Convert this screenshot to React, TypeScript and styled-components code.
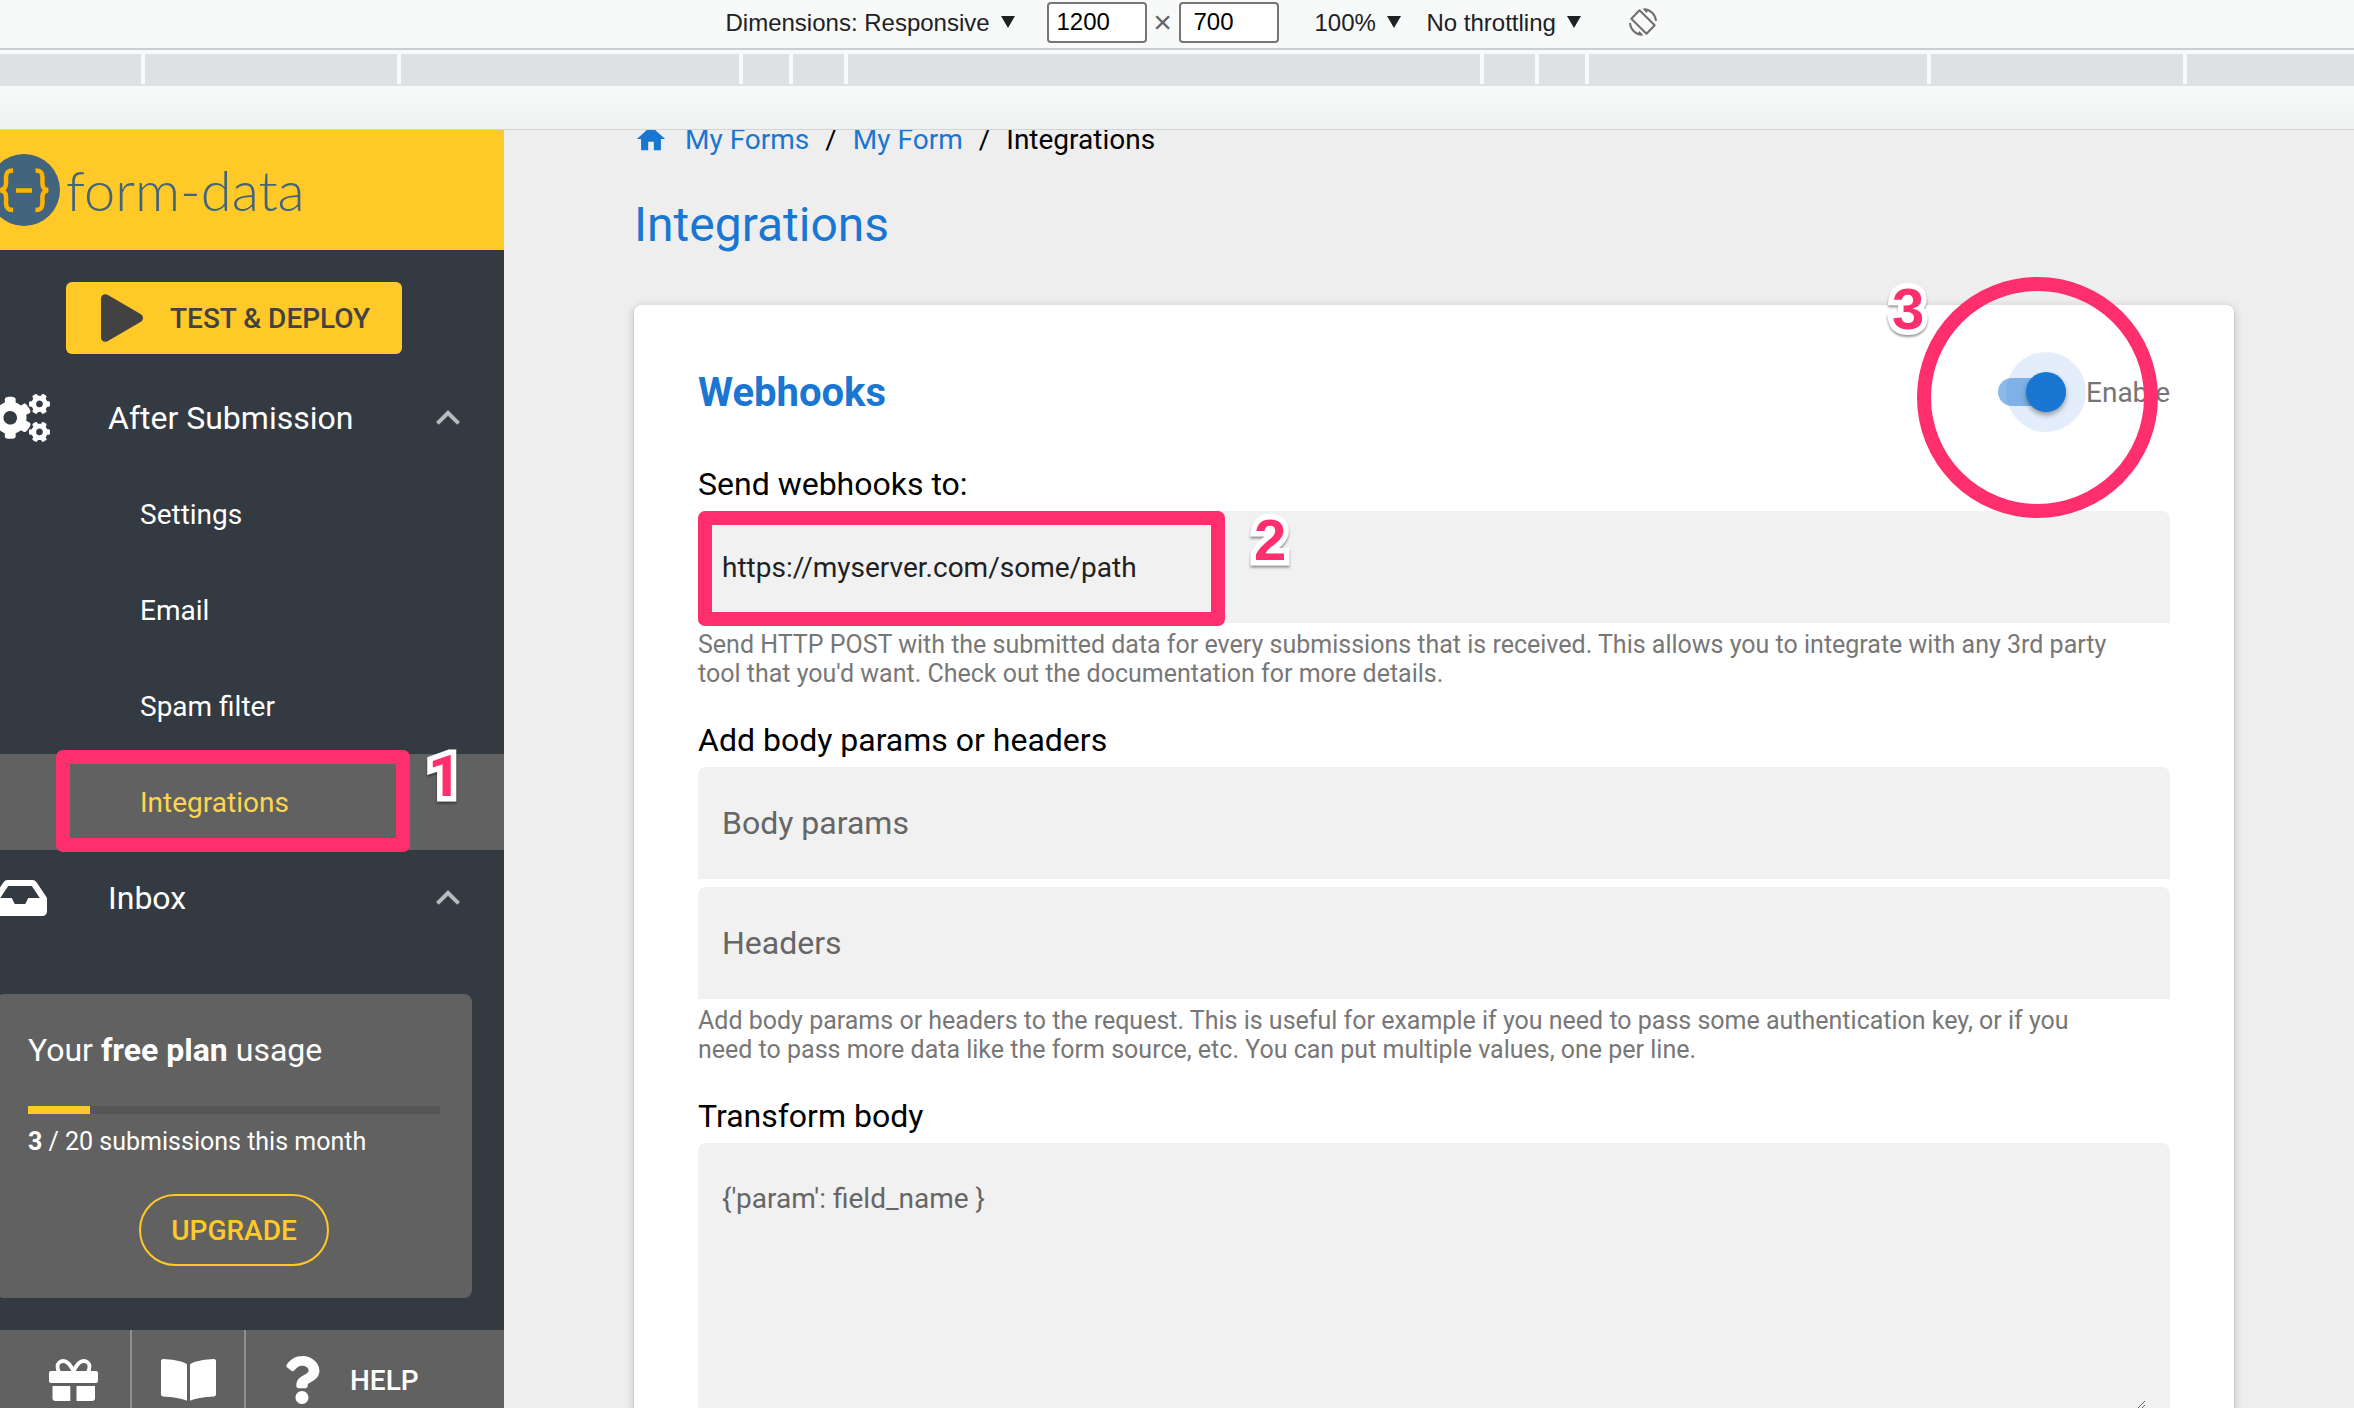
import React, { useState } from "react";
import styled, { createGlobalStyle, css } from "styled-components";
import { FaCogs, FaInbox, FaQuestion } from "react-icons/fa";
import { MdHome, MdKeyboardArrowUp } from "react-icons/md";

const color = {
  chrome: "#f8faf9",
  ruler: "#dfe0e4",
  amber: "#ffc928",
  slate: "#343a42",
  grey: "#616161",
  blue: "#1976d2",
  page: "#eeeeee",
  field: "#f1f1f1",
  mark: "#ff2e6c",
  logo: "#42647d",
};

const GlobalStyle = createGlobalStyle`
  *, *::before, *::after { box-sizing: border-box; }
  body { margin: 0; font-family: Roboto, "Liberation Sans", sans-serif; }
  button, input, textarea, select { font: inherit; color: inherit; }
  h1, h2, p, ol, ul { margin: 0; padding: 0; list-style: none; }
  a { color: inherit; text-decoration: none; }
`;

const Screen = styled.div`
  display: flex;
  flex-direction: column;
  height: 100vh;
  overflow: hidden;
`;

/* Device toolbar */

const Toolbar = styled.div`
  flex: none;
  display: flex;
  align-items: center;
  justify-content: center;
  height: 50px;
  padding: 0 0 4px 28px;
  background: ${color.chrome};
  border-bottom: 2px solid #cacdd1;
  color: #202124;
  font: 24px "Liberation Sans", Arial, sans-serif;
`;

const DropDown = styled.label<{ $before?: number; $after: number }>`
  display: grid;
  grid-template-columns: auto 14px;
  align-items: center;
  margin-left: ${(p) => p.$before ?? 0}px;
  margin-right: ${(p) => p.$after}px;

  select {
    grid-area: 1 / 1 / 2 / 3;
    appearance: none;
    margin: 0;
    padding: 0 24px 0 0;
    border: 0;
    background: none;
  }
  svg {
    grid-area: 1 / 2;
    pointer-events: none;
  }
`;

const SizeInput = styled.input<{ $indent: number }>`
  width: 100px;
  height: 41px;
  padding: 0 0 0 ${(p) => p.$indent}px;
  border: 2px solid #757575;
  border-radius: 4px;
  background: #fff;
  color: #000;
`;

const Times = styled.span`
  width: 32px;
  text-align: center;
  color: #5f6368;
  font-size: 32px;
  line-height: 40px;
`;

const RotateButton = styled.button`
  display: flex;
  margin: 0;
  padding: 0;
  border: 0;
  background: none;
`;

const Ruler = styled.div`
  flex: none;
  display: grid;
  grid-template-columns: 1fr 252px 338px 46px 51px 632px 51px 46px 338px 252px 1fr;
  gap: 4px;
  height: 36px;
  margin-left: -26px;
  padding-top: 4px;
  background: linear-gradient(${color.chrome} 34px, ${color.ruler} 34px);

  span { background: ${color.ruler}; }
`;

const Gutter = styled.div`
  flex: none;
  height: 44px;
  background: linear-gradient(${color.chrome}, #eff1f1);
  border-bottom: 1px solid #d0d5d5;
`;

const Viewport = styled.div`
  flex: 1;
  display: flex;
  min-height: 0;
  overflow: hidden;
  background: ${color.page};
`;

/* Sidebar */

const Sidebar = styled.aside`
  flex: none;
  display: flex;
  flex-direction: column;
  width: 504px;
  background: ${color.slate};
  color: #fff;
`;

const Brand = styled.a`
  flex: none;
  display: flex;
  align-items: center;
  gap: 6px;
  height: 120px;
  background: ${color.amber};
  color: ${color.logo};
  font: 300 56px/60px Lato, sans-serif;

  svg { flex: none; margin-left: -12px; }
`;

const DeployButton = styled.button`
  flex: none;
  display: flex;
  align-items: center;
  gap: 27px;
  width: 336px;
  height: 72px;
  margin: 32px 0 16px 66px;
  padding: 0 0 0 35px;
  border: 0;
  border-radius: 6px;
  background: ${color.amber};
  color: #424242;
  font-size: 28px;
  font-weight: 500;
`;

const Menu = styled.ul`
  flex: none;
`;

const GroupButton = styled.button`
  display: grid;
  grid-template-columns: 60px 1fr 48px;
  column-gap: 58px;
  align-items: center;
  justify-items: start;
  width: 100%;
  height: 96px;
  margin: 0;
  padding: 0 32px 0 0;
  border: 0;
  background: none;
  font-size: 32px;
  text-align: left;

  > svg:first-child { justify-self: center; }
  > svg:last-child { color: #b9bbbe; }
`;

const GroupRow = styled.li`
  margin-left: -10px;
`;

const SubLink = styled.a<{ $active?: boolean }>`
  position: relative;
  display: flex;
  align-items: center;
  height: 96px;
  padding-left: 140px;
  font-size: 28px;
  ${(p) =>
    p.$active &&
    css`
      background: ${color.grey};
      color: #ffd54f;
    `}
`;

const PlanCard = styled.section`
  flex: none;
  display: flex;
  flex-direction: column;
  margin: 48px 32px 32px -4px;
  padding: 36px 32px 32px;
  border-radius: 8px;
  background: ${color.grey};
`;

const PlanTitle = styled.p`
  font-size: 32px;
  line-height: 40px;
`;

const PlanMeter = styled.div`
  height: 8px;
  margin: 36px 0 14px;
  background: #575757;
`;

const PlanMeterFill = styled.div`
  height: 100%;
  background: ${color.amber};
`;

const PlanCount = styled.p`
  font-size: 25px;
  line-height: 28px;
`;

const UpgradeButton = styled.button`
  align-self: center;
  width: 190px;
  height: 72px;
  margin-top: 38px;
  padding: 0;
  border: 2px solid ${color.amber};
  border-radius: 36px;
  background: none;
  color: ${color.amber};
  font-size: 28px;
  font-weight: 500;
`;

const FooterBar = styled.nav`
  flex: 1;
  display: grid;
  grid-template-columns: 130px 114px 1fr;
  grid-template-rows: 100px;
  background: ${color.grey};
  font-size: 28px;
  font-weight: 500;

  a {
    display: flex;
    align-items: center;
    justify-content: center;
  }
  a + a { border-left: 2px solid #8f8f8f; }
  a:first-child { padding-left: 16px; }
  a:last-child {
    justify-content: flex-start;
    gap: 24px;
    padding-left: 32px;
  }
`;

/* Content */

const Content = styled.main`
  flex: 1;
  display: flex;
  flex-direction: column;
  min-width: 0;
  padding: 0 120px 0 130px;
`;

const Crumbs = styled.ol`
  flex: none;
  display: flex;
  align-items: center;
  height: 40px;
  margin-top: -11px;
  font-size: 28px;

  li { display: flex; align-items: center; }
  li + li::before { content: "/"; padding: 0 16px; }
  li:first-child + li::before { content: none; }
  a { color: ${color.blue}; }
  svg { display: block; margin-right: 17px; }
`;

const PageTitle = styled.h1`
  margin: 38px 0 52px;
  color: ${color.blue};
  font-size: 48px;
  font-weight: 400;
  line-height: 56px;
`;

const Card = styled.section`
  flex: none;
  padding: 47px 64px;
  border-radius: 8px;
  background: #fff;
  box-shadow: 0 2px 2px rgba(0, 0, 0, 0.12), 0 2px 10px rgba(0, 0, 0, 0.22);
`;

const CardHeader = styled.div`
  display: flex;
  align-items: center;
  justify-content: space-between;
  height: 80px;
  margin-bottom: 32px;
`;

const CardTitle = styled.h2`
  color: ${color.blue};
  font-size: 40px;
  font-weight: 700;
`;

const SwitchLabel = styled.label`
  position: relative;
  display: flex;
  align-items: center;
  gap: 20px;
  color: #757575;
  font-size: 28px;
`;

const SwitchInput = styled.input`
  appearance: none;
  position: relative;
  width: 68px;
  height: 28px;
  margin: 0;
  border-radius: 14px;
  background: rgba(25, 118, 210, 0.5);

  &::before, &::after {
    content: "";
    position: absolute;
    border-radius: 50%;
  }
  &::before {
    top: -26px;
    left: 8px;
    width: 80px;
    height: 80px;
    background: rgba(25, 118, 210, 0.12);
  }
  &::after {
    top: -6px;
    left: 28px;
    width: 40px;
    height: 40px;
    background: ${color.blue};
    box-shadow: 0 3px 5px rgba(0, 0, 0, 0.35);
  }
`;

const FieldLabel = styled.label`
  display: block;
  margin-bottom: 7px;
  color: #000;
  font-size: 32px;
  line-height: 40px;
`;

const FieldBox = styled.div`
  position: relative;

  & + & { margin-top: 8px; }
`;

const fieldStyle = css`
  display: block;
  width: 100%;
  border: 0;
  border-radius: 8px 8px 0 0;
  background: ${color.field};
  color: #212121;
  &::placeholder { color: #666; opacity: 1; }
`;

const TextField = styled.input<{ $large?: boolean }>`
  ${fieldStyle}
  height: 112px;
  padding: 0 24px;
  font-size: ${(p) => (p.$large ? 32 : 28)}px;
`;

const AreaFrame = styled.div`
  padding: 38px 24px 32px;
  border-radius: 8px 8px 0 0;
  background: ${color.field};
`;

const TextArea = styled.textarea`
  ${fieldStyle}
  height: 228px;
  padding: 0;
  font-size: 28px;
  line-height: 36px;
  resize: vertical;
`;

const Hint = styled.p`
  margin: 7px 0 32px;
  color: #777;
  font-size: 25px;
  line-height: 29px;
`;

/* Tutorial marks laid over the page */

type Spot = { $left: number; $top: number };

const MarkBox = styled.span<Spot & { $width: number; $height: number; $round?: boolean }>`
  position: absolute;
  z-index: 2;
  left: ${(p) => p.$left}px;
  top: ${(p) => p.$top}px;
  width: ${(p) => p.$width}px;
  height: ${(p) => p.$height}px;
  border: 14px solid ${color.mark};
  border-radius: ${(p) => (p.$round ? "50%" : "7px")};
  pointer-events: none;
`;

const MarkNumber = styled.span<Spot & { $family?: string }>`
  position: absolute;
  z-index: 2;
  left: ${(p) => p.$left}px;
  top: ${(p) => p.$top}px;
  color: ${color.mark};
  font: 700 58px/58px ${(p) => p.$family ?? '"Liberation Sans"'}, Arial, sans-serif;
  -webkit-text-stroke: 11px #fff;
  paint-order: stroke fill;
  stroke-linejoin: round;
  filter: drop-shadow(0 2px 1px rgba(0, 0, 0, 0.4));
  pointer-events: none;
`;

const Triangle = () => (
  <svg width="14" height="12" viewBox="0 0 14 12" aria-hidden="true">
    <path d="M0 0h14L7 12z" fill="#202124" />
  </svg>
);

const RotateIcon = () => (
  <svg width="28" height="28" viewBox="0 0 28 28" fill="none" stroke="#6e6e6e" strokeWidth="2" aria-hidden="true">
    <path d="M10.5 2.3 25.7 17.2 17.5 25.7 2.3 10.8z" strokeLinejoin="round" />
    <path d="M15 1.2C21.5 1.4 26.5 6.5 27 13" />
    <path d="M13 26.8C6.5 26.6 1.5 21.5 1 15" />
    <path d="M13.5 0.5 20 1.5 17.5 5z" fill="#6e6e6e" stroke="none" />
    <path d="M14.5 27.5 8 26.5 10.5 23z" fill="#6e6e6e" stroke="none" />
  </svg>
);

const LogoMark = () => (
  <svg width="72" height="72" viewBox="0 0 72 72" aria-hidden="true">
    <circle cx="36" cy="36" r="36" fill={color.logo} />
    <g fill="none" stroke="#ffb300" strokeWidth="4.5">
      <path d="M25 16.5C19.5 16.5 18 19 18 23.5C18 29 19.5 35 12 36.2C19.5 37.5 18 43 18 48.5C18 53.5 19.5 56 25 56" />
      <path d="M47.5 16.5C53 16.5 54.5 19 54.5 23.5C54.5 29 53 35 60 36.2C53 37.5 54.5 43 54.5 48.5C54.5 53.5 53 56 47.5 56" />
      <path d="M28 36.5h16" />
    </g>
  </svg>
);

const PlayIcon = () => (
  <svg width="42" height="48" viewBox="0 0 42 48" aria-hidden="true">
    <path
      d="M0 4.5C0 1 3.5-1 6.5 .8L39.5 20C42.8 22 42.8 26 39.5 28L6.5 47.2C3.5 49 0 47 0 43.5z"
      fill="currentColor"
    />
  </svg>
);

const GiftIcon = () => (
  <svg width="49" height="42" viewBox="0 0 49 42" fill="#fff" aria-hidden="true">
    <rect y="12" width="49" height="12" rx="2" />
    <path d="M3.5 27H21.3V42H6.5a3 3 0 0 1-3-3z" />
    <path d="M27.5 27H46V39a3 3 0 0 1-3 3H27.5z" />
    <path
      d="M24.5 12C21.5 6 18.5 2 14.5 2C11 2 8.5 4.5 8.5 7.5C8.5 9.5 9 11 10 13M24.5 12C27.5 6 30.5 2 34.5 2C38 2 40.5 4.5 40.5 7.5C40.5 9.5 40 11 39 13"
      fill="none"
      stroke="#fff"
      strokeWidth="3.8"
    />
  </svg>
);

const BookIcon = () => (
  <svg width="55" height="42" viewBox="0 0 55 40" preserveAspectRatio="none" fill="#fff" aria-hidden="true">
    <path d="M0 2C0 .8 1 0 2.2 0C10 .4 19 1.5 25 4.2C25.7 4.5 26 5 26 5.8V39.8C19.5 36.8 10 36 2 35.6C.8 35.5 0 34.7 0 33.5z" />
    <path d="M55 2C55 .8 54 0 52.8 0C45 .4 36 1.5 30 4.2C29.3 4.5 29 5 29 5.8V39.8C35.5 36.8 45 36 53 35.6C54.2 35.5 55 34.7 55 33.5z" />
  </svg>
);

const SUBMENU = ["Settings", "Email", "Spam filter", "Integrations"];

export default function App() {
  const [enabled, setEnabled] = useState(true);
  const used = 3;
  const limit = 20;

  return (
    <Screen>
      <GlobalStyle />
      <Toolbar>
        <DropDown $after={32}>
          <select aria-label="Device">
            <option>Dimensions: Responsive</option>
          </select>
          <Triangle />
        </DropDown>
        <SizeInput $indent={8} defaultValue="1200" aria-label="Width" />
        <Times>×</Times>
        <SizeInput $indent={13} defaultValue="700" aria-label="Height" />
        <DropDown $before={36} $after={26}>
          <select aria-label="Zoom">
            <option>100%</option>
          </select>
          <Triangle />
        </DropDown>
        <DropDown $after={48}>
          <select aria-label="Throttling">
            <option>No throttling</option>
          </select>
          <Triangle />
        </DropDown>
        <RotateButton aria-label="Rotate">
          <RotateIcon />
        </RotateButton>
      </Toolbar>
      <Ruler aria-hidden="true">
        {Array.from({ length: 11 }, (_, i) => (
          <span key={i} />
        ))}
      </Ruler>
      <Gutter />

      <Viewport>
        <Sidebar>
          <Brand href="#home">
            <LogoMark />
            form-data
          </Brand>
          <DeployButton>
            <PlayIcon />
            TEST &amp; DEPLOY
          </DeployButton>
          <Menu>
            <GroupRow>
              <GroupButton>
                <FaCogs size={60} viewBox="0 0 640 512" />
                After Submission
                <MdKeyboardArrowUp size={48} />
              </GroupButton>
            </GroupRow>
            {SUBMENU.map((name) => {
              const active = name === "Integrations";
              return (
                <li key={name}>
                  <SubLink href={`#${name}`} $active={active}>
                    {name}
                    {active && (
                      <>
                        <MarkBox $left={56} $top={-4} $width={354} $height={102} />
                        <MarkNumber $left={428} $top={-7} $family="Roboto">1</MarkNumber>
                      </>
                    )}
                  </SubLink>
                </li>
              );
            })}
            <GroupRow>
              <GroupButton>
                <FaInbox size={54} />
                Inbox
                <MdKeyboardArrowUp size={48} />
              </GroupButton>
            </GroupRow>
          </Menu>
          <PlanCard>
            <PlanTitle>
              Your <b>free plan</b> usage
            </PlanTitle>
            <PlanMeter role="progressbar" aria-valuenow={used} aria-valuemax={limit} aria-label="Submissions used">
              <PlanMeterFill style={{ width: `${(used / limit) * 100}%` }} />
            </PlanMeter>
            <PlanCount>
              <b>{used}</b> / {limit} submissions this month
            </PlanCount>
            <UpgradeButton>UPGRADE</UpgradeButton>
          </PlanCard>
          <FooterBar>
            <a href="#gift" aria-label="Rewards"><GiftIcon /></a>
            <a href="#docs" aria-label="Documentation"><BookIcon /></a>
            <a href="#help"><FaQuestion size={48} />HELP</a>
          </FooterBar>
        </Sidebar>

        <Content>
          <Crumbs>
            <li><a href="#home" aria-label="Home"><MdHome size={34} /></a></li>
            <li><a href="#forms">My Forms</a></li>
            <li><a href="#form">My Form</a></li>
            <li>Integrations</li>
          </Crumbs>
          <PageTitle>Integrations</PageTitle>
          <Card>
            <CardHeader>
              <CardTitle>Webhooks</CardTitle>
              <SwitchLabel>
                <SwitchInput type="checkbox" checked={enabled} onChange={(e) => setEnabled(e.target.checked)} />
                Enable
                <MarkBox $left={-81} $top={-99} $width={241} $height={241} $round />
                <MarkNumber $left={-106} $top={-96}>3</MarkNumber>
              </SwitchLabel>
            </CardHeader>

            <FieldLabel htmlFor="url">Send webhooks to:</FieldLabel>
            <FieldBox>
              <TextField id="url" defaultValue="https://myserver.com/some/path" />
              <MarkBox $left={0} $top={0} $width={527} $height={115} />
              <MarkNumber $left={556} $top={0}>2</MarkNumber>
            </FieldBox>
            <Hint>
              Send HTTP POST with the submitted data for every submissions that is received. This allows you to
              integrate with any 3rd party
              <br />
              tool that you'd want. Check out the documentation for more details.
            </Hint>

            <FieldLabel htmlFor="params">Add body params or headers</FieldLabel>
            <FieldBox>
              <TextField id="params" $large placeholder="Body params" />
            </FieldBox>
            <FieldBox>
              <TextField $large placeholder="Headers" aria-label="Headers" />
            </FieldBox>
            <Hint>
              Add body params or headers to the request. This is useful for example if you need to pass some
              authentication key, or if you
              <br />
              need to pass more data like the form source, etc. You can put multiple values, one per line.
            </Hint>

            <FieldLabel htmlFor="transform">Transform body</FieldLabel>
            <AreaFrame>
              <TextArea id="transform" placeholder="{'param': field_name }" />
            </AreaFrame>
          </Card>
        </Content>
      </Viewport>
    </Screen>
  );
}
